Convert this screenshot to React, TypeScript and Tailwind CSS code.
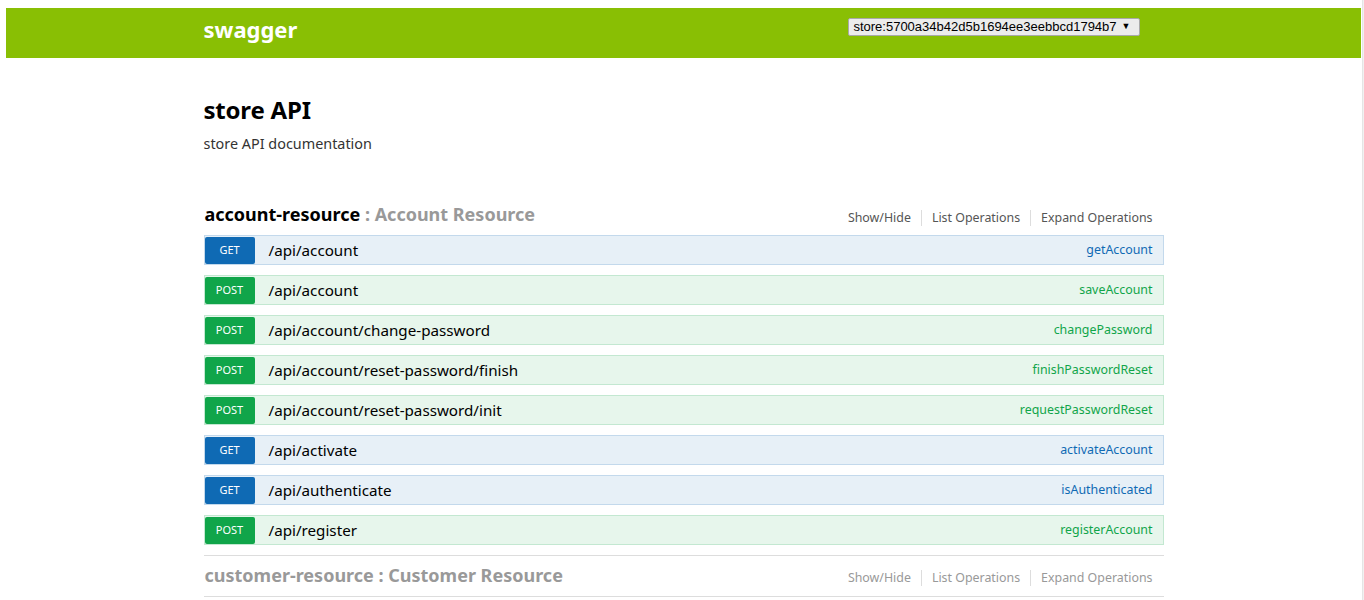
import { useState } from 'react';

interface Operation {
  method: 'GET' | 'POST';
  path: string;
  nickname: string;
}

const operations: Operation[] = [
  { method: 'GET', path: '/api/account', nickname: 'getAccount' },
  { method: 'POST', path: '/api/account', nickname: 'saveAccount' },
  { method: 'POST', path: '/api/account/change-password', nickname: 'changePassword' },
  { method: 'POST', path: '/api/account/reset-password/finish', nickname: 'finishPasswordReset' },
  { method: 'POST', path: '/api/account/reset-password/init', nickname: 'requestPasswordReset' },
  { method: 'GET', path: '/api/activate', nickname: 'activateAccount' },
  { method: 'GET', path: '/api/authenticate', nickname: 'isAuthenticated' },
  { method: 'POST', path: '/api/register', nickname: 'registerAccount' },
];

const ResourceLinks = ({ muted }: { muted?: boolean }) => (
  <div className={`flex items-center text-[12.4px] ${muted ? 'text-[#999]' : 'text-[#555]'}`}>
    <span className="px-[10px] leading-[16px] border-r border-[#ddd]">Show/Hide</span>
    <span className="px-[10px] leading-[16px] border-r border-[#ddd]">List Operations</span>
    <span className="pl-[10px] pr-[11px] leading-[16px]">Expand Operations</span>
  </div>
);

const OperationRow = ({ op }: { op: Operation }) => {
  const isGet = op.method === 'GET';
  return (
    <div
      className={`flex items-center h-[30px] border ${
        isGet ? 'bg-[#e7f0f7] border-[#c3d9ec]' : 'bg-[#e7f6ec] border-[#c3e8d1]'
      }`}
    >
      <span
        className={`w-[50px] h-[27px] flex items-center justify-center text-[11px] text-white rounded-[2px] ${
          isGet ? 'bg-[#0f6ab4]' : 'bg-[#10a54a]'
        }`}
      >
        {op.method}
      </span>
      <span className="ml-[14px] text-[15.2px] text-black flex-1">{op.path}</span>
      <span className={`pr-[10px] text-[12.4px] ${isGet ? 'text-[#0f6ab4]' : 'text-[#10a54a]'}`}>
        {op.nickname}
      </span>
    </div>
  );
};

const App = () => {
  const [apiKey] = useState('store:5700a34b42d5b1694ee3eebbcd1794b7');

  return (
    <div className="flex min-h-[600px] bg-white" style={{ fontFamily: '"Noto Sans", "Open Sans", sans-serif' }}>
      <div className="flex-1 pt-[8px] pl-[6px] pr-[1px]">
        <header className="h-[50px] bg-[#89bf04]">
          <div className="w-[960px] mx-auto flex items-start h-full">
            <span className="mt-[10px] text-white font-bold text-[22px] leading-none">swagger</span>
            <div className="ml-auto mr-[24px] mt-[10px]">
              <div
                className="flex items-center h-[18px] pl-[4px] pr-[8px] bg-[#ececec] border border-[#a9a9a9] rounded-[2px] text-[13px] text-black gap-[5px]"
                style={{ fontFamily: '"Liberation Sans", Arial, sans-serif' }}
              >
                <span>{apiKey}</span>
                <span className="text-[9px]">▼</span>
              </div>
            </div>
          </div>
        </header>

        <main className="w-[960px] mx-auto">
          <div className="pt-[36px]">
            <h1 className="text-[24px] font-bold text-black leading-[32px] tracking-[-0.2px]">store API</h1>
            <p className="mt-[9px] text-[14.4px] text-[#333] leading-[18px]">store API documentation</p>
          </div>

          <section className="mt-[47px]">
            <div className="flex items-end justify-between h-[34px] pb-[8px]">
              <h2 className="text-[18px] font-bold leading-[24px] pl-[1px]">
                <span className="text-black">account-resource</span>
                <span className="text-[#999]"> : Account Resource</span>
              </h2>
              <ResourceLinks />
            </div>
            <div className="flex flex-col gap-[10px] mt-[1px]">
              {operations.map((op, i) => (
                <OperationRow key={i} op={op} />
              ))}
            </div>
          </section>

          <section className="mt-[10px] border-t border-b border-[#ddd]">
            <div className="flex items-center justify-between h-[40px] pb-[2px]">
              <h2 className="text-[18px] font-bold leading-[24px] pl-[1px] text-[#999]">
                customer-resource : Customer Resource
              </h2>
              <div className="mt-[6px]">
                <ResourceLinks muted />
              </div>
            </div>
          </section>
        </main>
      </div>
      <div className="w-[2px] bg-[#f1f1f1] border-l border-[#e5e5e5]" />
    </div>
  );
};

export default App;
